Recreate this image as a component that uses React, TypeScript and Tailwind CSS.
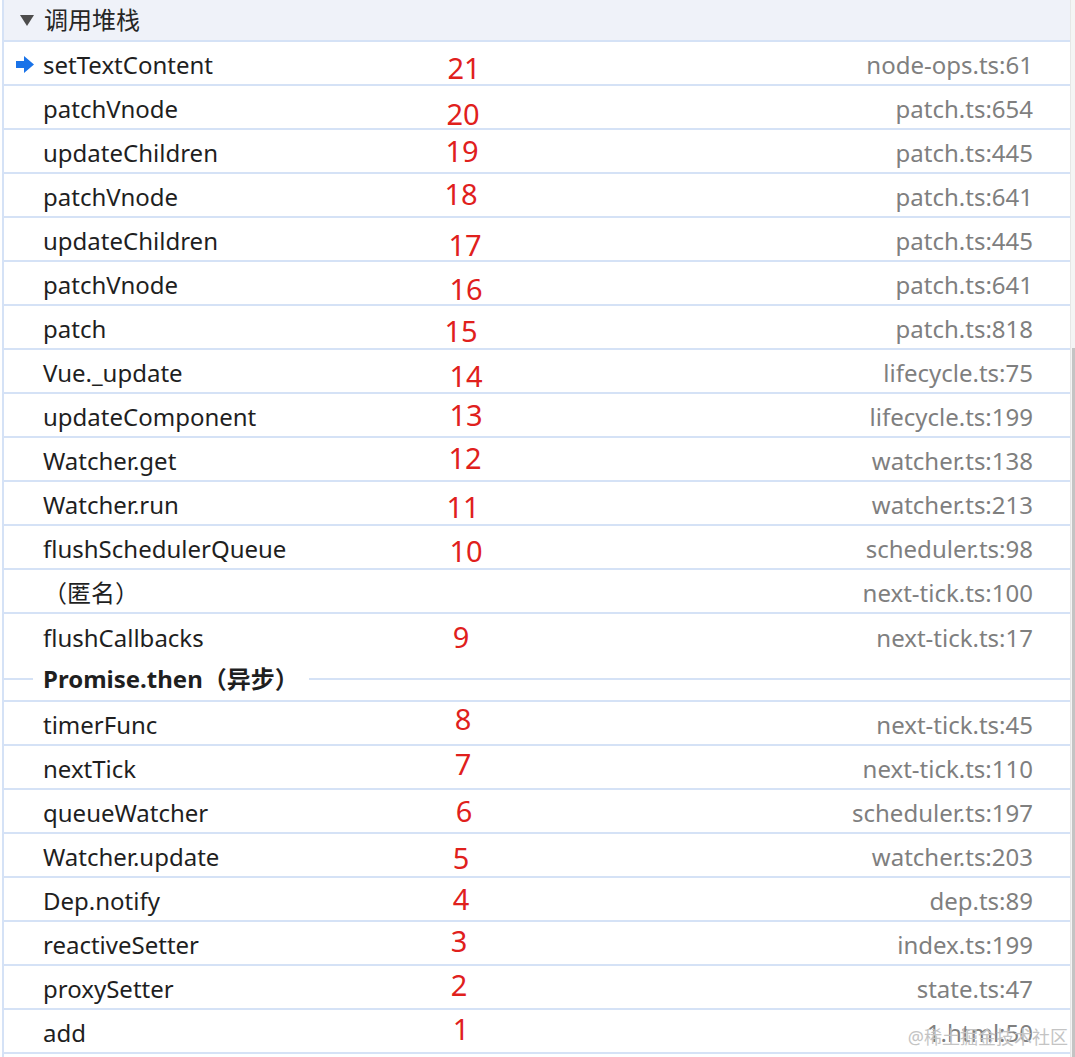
import React from 'react'

// ── Frames of the call stack ─────────────────────────────────────────────────
type Frame = {
  name: string
  file: string
  mark?: string
  dx?: number
  dy?: number
}

const TOP: Frame[] = [
  { name: 'setTextContent',      file: 'node-ops.ts:61',  mark: '21', dx: 464, dy: 4 },
  { name: 'patchVnode',          file: 'patch.ts:654',    mark: '20', dx: 463, dy: 6 },
  { name: 'updateChildren',      file: 'patch.ts:445',    mark: '19', dx: 462, dy: -1 },
  { name: 'patchVnode',          file: 'patch.ts:641',    mark: '18', dx: 461, dy: -2 },
  { name: 'updateChildren',      file: 'patch.ts:445',    mark: '17', dx: 465, dy: 5 },
  { name: 'patchVnode',          file: 'patch.ts:641',    mark: '16', dx: 466, dy: 5 },
  { name: 'patch',               file: 'patch.ts:818',    mark: '15', dx: 461, dy: 3 },
  { name: 'Vue._update',         file: 'lifecycle.ts:75', mark: '14', dx: 466, dy: 4 },
  { name: 'updateComponent',     file: 'lifecycle.ts:199', mark: '13', dx: 466, dy: -1 },
  { name: 'Watcher.get',         file: 'watcher.ts:138',  mark: '12', dx: 465, dy: -2 },
  { name: 'Watcher.run',         file: 'watcher.ts:213',  mark: '11', dx: 463, dy: 3 },
  { name: 'flushSchedulerQueue', file: 'scheduler.ts:98', mark: '10', dx: 466, dy: 3 },
  { name: '（匿名）',             file: 'next-tick.ts:100' },
  { name: 'flushCallbacks',      file: 'next-tick.ts:17', mark: '9', dx: 461, dy: 0 },
]

const BOTTOM: Frame[] = [
  { name: 'timerFunc',      file: 'next-tick.ts:45',  mark: '8', dx: 463, dy: -5 },
  { name: 'nextTick',       file: 'next-tick.ts:110', mark: '7', dx: 463, dy: -4 },
  { name: 'queueWatcher',   file: 'scheduler.ts:197', mark: '6', dx: 464, dy: -1 },
  { name: 'Watcher.update', file: 'watcher.ts:203',   mark: '5', dx: 461, dy: 2 },
  { name: 'Dep.notify',     file: 'dep.ts:89',        mark: '4', dx: 461, dy: -1 },
  { name: 'reactiveSetter', file: 'index.ts:199',     mark: '3', dx: 459, dy: -3 },
  { name: 'proxySetter',    file: 'state.ts:47',      mark: '2', dx: 459, dy: -3 },
  { name: 'add',            file: '1.html:50',        mark: '1', dx: 461, dy: -3 },
]

const FONT = "font-['Noto_Sans','Noto_Sans_CJK_SC',sans-serif]"

function CurrentArrow() {
  return (
    <svg width="18" height="17" viewBox="0 0 18 17" className="absolute left-[12px] top-[14px]">
      <path d="M0 5h8V0l10 8.5L8 17v-5H0z" fill="#1a73e8" />
    </svg>
  )
}

function Row({ f, current, last }: { f: Frame; current?: boolean; last?: boolean }) {
  return (
    <div
      className={
        'relative h-[44px] shrink-0 flex items-center pl-[39px] pr-[37px] pt-[4px] ' +
        (last ? '' : 'border-b-2 border-[#d5e2f6]')
      }
    >
      {current && <CurrentArrow />}
      <span className="text-[24px] text-[#1f1f1f] whitespace-nowrap">{f.name}</span>
      <span className="ml-auto text-[24px] text-[#7f7f7f] whitespace-nowrap">{f.file}</span>

      {/* annotation painted over the screenshot */}
      {f.mark && (
        <span
          className="absolute top-1/2 -translate-x-1/2 -translate-y-1/2 text-[29px] leading-none text-[#e0201c]"
          style={{ left: (f.dx ?? 462) - 4, marginTop: f.dy ?? 0 }}
        >
          {f.mark}
        </span>
      )}
    </div>
  )
}

export default function App() {
  return (
    <div className={`w-[1075px] h-[1057px] overflow-hidden bg-white flex ${FONT}`}>
      {/* ── Panel ──────────────────────────────────────────────────────────── */}
      <div className="relative w-[1070px] pl-[2px] flex flex-col">
        <div className="flex-1 border-l-2 border-[#d5e2f6] flex flex-col">
          {/* header */}
          <div className="h-[42px] shrink-0 bg-[#eff2f9] border-b-2 border-[#d5e2f6] flex items-center pl-[16px] gap-[10px]">
            <svg width="14" height="11" viewBox="0 0 14 11">
              <path d="M0 0h14L7 11z" fill="#4d4d4d" />
            </svg>
            <span className="text-[24px] text-[#262626]">调用堆栈</span>
          </div>

          {TOP.map((f, i) => (
            <Row key={i} f={f} current={i === 0} last={i === TOP.length - 1} />
          ))}

          {/* async boundary */}
          <div className="h-[44px] shrink-0 flex items-center border-b-2 border-[#d5e2f6]">
            <div className="w-[29px] h-[2px] bg-[#d5e2f6]" />
            <span className="px-[10px] text-[24px] font-bold text-[#1f1f1f] whitespace-nowrap">
              Promise.then（异步）
            </span>
            <div className="flex-1 h-[2px] bg-[#d5e2f6]" />
          </div>

          {BOTTOM.map((f, i) => (
            <Row key={i} f={f} />
          ))}
        </div>

        {/* watermark */}
        <span className="absolute right-[2px] bottom-[6px] text-[18px] text-[#c4c4c4] whitespace-nowrap">
          @稀土掘金技术社区
        </span>
      </div>

      {/* ── Scrollbar ─────────────────────────────────────────────────────── */}
      <div className="w-[5px] bg-[#f4f4f4] border-l border-[#e6e6e6] flex flex-col">
        <div className="h-[348px]" />
        <div className="flex-1 ml-[1px] bg-[#c4c4c4]" />
      </div>
    </div>
  )
}
